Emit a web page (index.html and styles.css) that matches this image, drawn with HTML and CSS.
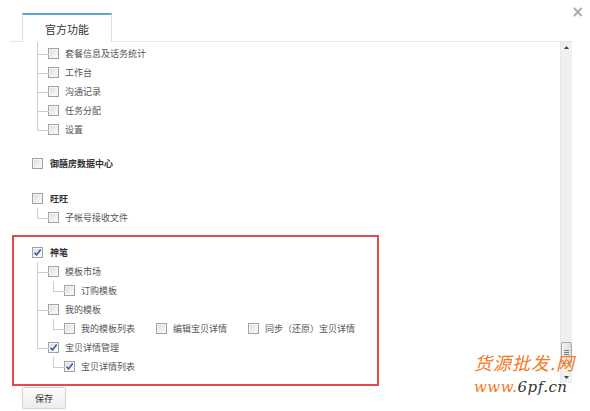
FILE: index.html
```html
<!DOCTYPE html>
<html lang="zh-CN">
<head>
<meta charset="utf-8">
<title>官方功能</title>
<link rel="stylesheet" href="styles.css">
</head>
<body>
<div class="dialog">
  <span class="close">×</span>
  <div class="tabs"><div class="tab">官方功能</div></div>
  <div class="panel">
    <div class="content">
      <ul class="children first">
        <li><div class="node"><span class="cb"></span><span class="label">套餐信息及话务统计</span></div></li>
        <li><div class="node"><span class="cb"></span><span class="label">工作台</span></div></li>
        <li><div class="node"><span class="cb"></span><span class="label">沟通记录</span></div></li>
        <li><div class="node"><span class="cb"></span><span class="label">任务分配</span></div></li>
        <li><div class="node"><span class="cb"></span><span class="label">设置</span></div></li>
      </ul>
      <div class="group g1">
        <div class="node"><span class="cb"></span><span class="label bold">御膳房数据中心</span></div>
      </div>
      <div class="group">
        <div class="node"><span class="cb"></span><span class="label bold">旺旺</span></div>
        <ul class="children">
          <li><div class="node"><span class="cb"></span><span class="label">子帐号接收文件</span></div></li>
        </ul>
      </div>
      <div class="group">
        <div class="node"><span class="cb checked"><svg viewBox="0 0 8 8"><path d="M1.3 4.2 L3.2 6.1 L6.8 1.4" /></svg></span><span class="label bold">神笔</span></div>
        <ul class="children">
          <li>
            <div class="node"><span class="cb"></span><span class="label">模板市场</span></div>
            <ul class="children">
              <li><div class="node"><span class="cb"></span><span class="label">订购模板</span></div></li>
            </ul>
          </li>
          <li>
            <div class="node"><span class="cb"></span><span class="label">我的模板</span></div>
            <ul class="children">
              <li><div class="node">
                <span class="item"><span class="cb"></span><span class="label">我的模板列表</span></span>
                <span class="item"><span class="cb"></span><span class="label">编辑宝贝详情</span></span>
                <span class="item"><span class="cb"></span><span class="label">同步（还原）宝贝详情</span></span>
              </div></li>
            </ul>
          </li>
          <li>
            <div class="node"><span class="cb checked"><svg viewBox="0 0 8 8"><path d="M1.3 4.2 L3.2 6.1 L6.8 1.4" /></svg></span><span class="label">宝贝详情管理</span></div>
            <ul class="children">
              <li><div class="node"><span class="cb checked"><svg viewBox="0 0 8 8"><path d="M1.3 4.2 L3.2 6.1 L6.8 1.4" /></svg></span><span class="label">宝贝详情列表</span></div></li>
            </ul>
          </li>
        </ul>
      </div>
    </div>
    <div class="scrollbar">
      <div class="sb-btn"><svg viewBox="0 0 11 11"><path d="M3 7 L5.5 4 L8 7 Z"/></svg></div>
      <div class="sb-track"><div class="sb-thumb"><i></i><i></i><i></i><i></i></div></div>
      <div class="sb-btn"><svg viewBox="0 0 11 11"><path d="M3 4 L5.5 7 L8 4 Z"/></svg></div>
    </div>
  </div>
  <button class="save">保存</button>
  <div class="highlight"></div>
  <div class="watermark">
    <div class="wm1">货源批发.网</div>
    <div class="wm2"><span class="o">www.</span>6pf.cn</div>
  </div>
</div>
</body>
</html>
```
FILE: styles.css
```css
* { box-sizing: border-box; }
html, body { margin: 0; padding: 0; background: #fff; }
body {
  font-family: "Noto Sans CJK SC", "Noto Sans", sans-serif;
  font-size: 9px;
  color: #555;
  width: 590px;
  height: 411px;
  overflow: hidden;
}
.dialog {
  position: relative;
  width: 590px;
  height: 411px;
  padding: 13px 18px 0 10px;
}
.close {
  position: absolute;
  top: 3px;
  right: 6px;
  font-family: "DejaVu Sans", sans-serif;
  font-size: 15px;
  font-weight: bold;
  color: #a8a8a8;
  line-height: 18px;
}
.tabs {
  display: flex;
  padding-left: 12px;
  position: relative;
  z-index: 1;
}
.tab {
  width: 90px;
  height: 29px;
  border-top: 2px solid #5aa7d6;
  border-left: 1px solid #dedede;
  border-right: 1px solid #dedede;
  background: #fff;
  margin-bottom: -1px;
  display: flex;
  align-items: center;
  justify-content: center;
  font-size: 11px;
  color: #333;
}
.panel {
  display: flex;
  height: 342px;
  border-top: 1px solid #e6e6e6;
}
.content {
  flex: 1;
  overflow: hidden;
  padding: 2px 0 0 22px;
}
ul.children {
  list-style: none;
  margin: 0 0 0 5px;
  padding: 0 0 0 11px;
}
ul.children > li { position: relative; }
ul.children > li::before {
  content: "";
  position: absolute;
  left: -11px;
  top: 0;
  width: 11px;
  height: 10px;
  border-left: 1px solid #cdcdcd;
  border-bottom: 1px solid #cdcdcd;
}
ul.children > li:not(:last-child)::after {
  content: "";
  position: absolute;
  left: -11px;
  top: 10px;
  bottom: 0;
  border-left: 1px solid #cdcdcd;
}
ul.first > li:first-child::before { top: -2px; height: 12px; }
.node {
  display: flex;
  align-items: center;
  height: 19px;
}
.item { display: flex; align-items: center; margin-right: 21px; }
.cb {
  width: 11px;
  height: 11px;
  flex: none;
  border: 1px solid #a2a2a2;
  background: linear-gradient(135deg, #dadada 0%, #eeeeee 55%, #fcfcfc 100%);
  box-shadow: inset 0 0 0 1px #f6f6f6;
  display: flex;
  align-items: center;
  justify-content: center;
}
.cb svg { width: 9px; height: 9px; }
.cb svg path { fill: none; stroke: #3456a8; stroke-width: 1.4; }
.label { margin-left: 6px; white-space: nowrap; line-height: 19px; }
.label.bold { font-weight: bold; color: #333; margin-left: 7px; }
.group { margin-top: 16px; }
.group.g1 { margin-top: 15px; }
.scrollbar {
  width: 12px;
  display: flex;
  flex-direction: column;
  background: #f0f0f0;
  border-left: 1px solid #e6e6e6;
}
.sb-btn { height: 11px; flex: none; }
.sb-btn svg { width: 11px; height: 11px; display: block; }
.sb-btn svg path { fill: #444; }
.sb-track {
  flex: 1;
  display: flex;
  flex-direction: column;
  justify-content: flex-end;
  padding-bottom: 8px;
}
.sb-thumb {
  height: 22px;
  border: 1px solid #a9a9a9;
  border-radius: 2px;
  background: linear-gradient(90deg, #f4f4f4, #dcdcdc);
  display: flex;
  flex-direction: column;
  align-items: center;
  justify-content: center;
  gap: 1px;
}
.sb-thumb i { display: block; width: 5px; height: 1px; background: #777; }
.save {
  margin: 4px 0 0 12px;
  width: 44px;
  height: 22px;
  border: 1px solid #d3d3d3;
  border-radius: 2px;
  background: linear-gradient(#fdfdfd, #ececec);
  font-family: "Noto Sans CJK SC", sans-serif;
  font-size: 9px;
  color: #333;
  padding: 0;
}
.highlight {
  position: absolute;
  left: 12px;
  top: 235px;
  width: 367px;
  height: 151px;
  border: 2px solid #e8474a;
}
.watermark {
  position: absolute;
  left: 474px;
  top: 349px;
  font-family: "DejaVu Serif", serif;
  font-style: italic;
}
.wm1 {
  font-family: "Noto Sans CJK SC", sans-serif;
  font-size: 18px;
  color: #f47a1f;
  letter-spacing: 1px;
  line-height: 26px;
}
.wm2 {
  font-size: 15px;
  color: #333;
  line-height: 24px;
  letter-spacing: 0.5px;
}
.wm2 .o { color: #f47a1f; }
```
